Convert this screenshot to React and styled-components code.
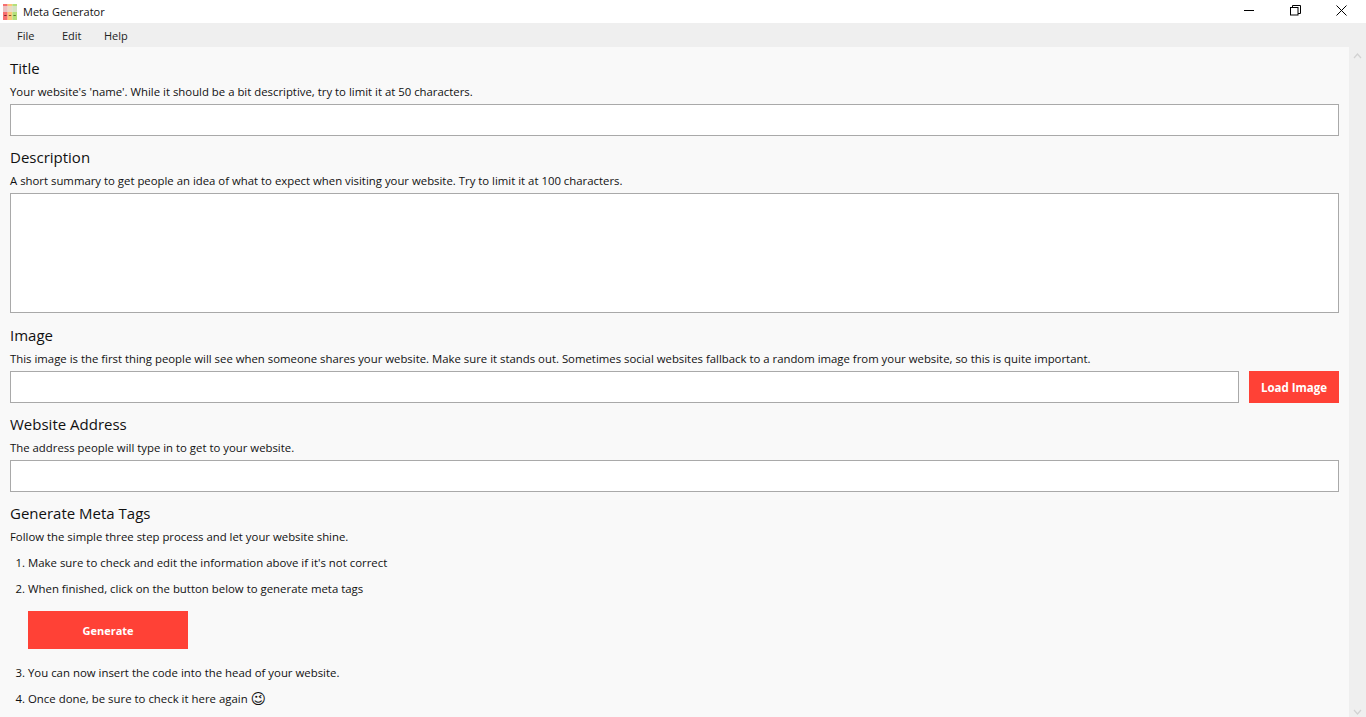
import React from 'react';
import styled, { createGlobalStyle } from 'styled-components';

const GlobalStyle = createGlobalStyle`
  html, body { margin: 0; padding: 0; height: 100%; overflow: hidden; }
  #root { height: 100%; }
  body { font-family: "Open Sans", "Noto Sans", sans-serif; color: #111; }
`;

const Window = styled.div`
  height: 717px;
  display: flex;
  flex-direction: column;
  background: #fff;
`;

const TitleBar = styled.div`
  height: 23px;
  display: flex;
  align-items: center;
  background: #fff;
  flex: none;
`;

const AppName = styled.span`
  font-size: 11px;
  margin-left: 6px;
  color: #111;
`;

const WindowButtons = styled.div`
  margin-left: auto;
  margin-right: 2px;
  padding-bottom: 3px;
  display: flex;
`;

const WindowButton = styled.div`
  width: 46px;
  height: 20px;
  display: flex;
  align-items: center;
  justify-content: center;
`;

const MenuBar = styled.div`
  height: 24px;
  display: grid;
  grid-template-columns: 45px 42px auto;
  align-items: center;
  background: #efefef;
  padding: 1px 0 0 17px;
  box-sizing: border-box;
  flex: none;
`;

const MenuItem = styled.span`
  font-size: 11px;
  color: #222;
`;

const Body = styled.div`
  flex: 1;
  display: flex;
  min-height: 0;
`;

const Content = styled.div`
  flex: 1;
  background: #f9f9f9;
  padding: 10px 10px 0;
  overflow: hidden;
`;

const ScrollTrack = styled.div`
  width: 17px;
  background: #efefef;
  display: flex;
  flex-direction: column;
  justify-content: space-between;
  align-items: center;
  padding: 6px 0 2px;
  box-sizing: border-box;
`;

const Section = styled.section`
  margin-bottom: ${p => p.$gap || 10}px;
`;

const Heading = styled.h2`
  margin: 0;
  font-size: 15px;
  font-weight: 400;
  line-height: 22px;
`;

const Hint = styled.p`
  margin: 4px 0 3px;
  font-size: 11.37px;
  line-height: 18px;
`;

const Row = styled.div`
  display: flex;
  gap: 10px;
`;

const Input = styled.input`
  display: block;
  flex: 1;
  width: 100%;
  box-sizing: border-box;
  height: 32px;
  border: 1px solid #a9a9a9;
  background: #fff;
  outline: none;
`;

const TextArea = styled.textarea`
  display: block;
  width: 100%;
  box-sizing: border-box;
  height: 120px;
  border: 1px solid #a9a9a9;
  background: #fff;
  outline: none;
  resize: none;
`;

const RedButton = styled.button`
  flex: none;
  width: ${p => p.$wide ? '160px' : '90px'};
  height: ${p => p.$wide ? '38px' : '32px'};
  border: none;
  background: #ff4136;
  color: #fff;
  font-family: inherit;
  font-size: ${p => p.$wide ? '11px' : '11.5px'};
  font-weight: 700;
  padding: 0;
`;

const Steps = styled.ol`
  margin: 8px 0 0;
  padding: 0 0 0 18px;
  font-size: 11.4px;
`;

const Step = styled.li`
  line-height: 18px;
  height: auto;
  margin-bottom: 8px;
`;

const GenerateWrap = styled.div`
  margin: 13px 0 15px;
`;

const Wink = styled.span`
  font-family: "DejaVu Sans", sans-serif;
  font-size: 15px;
  line-height: 14px;
  vertical-align: -1px;
`;

function AppIcon() {
  return (
    <svg width="14" height="16" viewBox="0 0 14 16" style={{ marginLeft: 3, marginTop: 1, flex: 'none' }}>
      <rect x="0" y="0" width="4.67" height="16" fill="#f76f6f" />
      <rect x="4.67" y="0" width="4.67" height="16" fill="#fbc77a" />
      <rect x="9.33" y="0" width="4.67" height="16" fill="#b5e07a" />
      <rect x="0" y="2" width="14" height="6" fill="#e4e4e4" opacity="0.7" />
      <rect x="1.2" y="11" width="2.4" height="1" fill="#7a2b2b" />
      <rect x="5.8" y="11" width="2.4" height="1" fill="#7a5a2b" />
      <rect x="10.4" y="11" width="2.4" height="1" fill="#5a7a2b" />
    </svg>
  );
}

function Arrow({ down }) {
  return (
    <svg width="9" height="6" viewBox="0 0 9 6">
      <path d={down ? 'M1 1l3.5 4L8 1' : 'M1 5l3.5-4L8 5'} fill="none" stroke="#d2d2d2" strokeWidth="1.2" />
    </svg>
  );
}

export default function App() {
  return (
    <>
      <GlobalStyle />
      <Window>
        <TitleBar>
          <AppIcon />
          <AppName>Meta Generator</AppName>
          <WindowButtons>
            <WindowButton>
              <svg width="11" height="11" viewBox="0 0 11 11"><path d="M0 5.5h10" stroke="#000" /></svg>
            </WindowButton>
            <WindowButton>
              <svg width="11" height="11" viewBox="0 0 11 11" fill="none" stroke="#000"><rect x=".5" y="2.5" width="7.5" height="7.5" /><path d="M2.5 2.5V.5h8v8H8" /></svg>
            </WindowButton>
            <WindowButton>
              <svg width="11" height="11" viewBox="0 0 11 11"><path d="M.5.5l10 10M10.5.5l-10 10" stroke="#000" /></svg>
            </WindowButton>
          </WindowButtons>
        </TitleBar>
        <MenuBar>
          <MenuItem>File</MenuItem>
          <MenuItem>Edit</MenuItem>
          <MenuItem>Help</MenuItem>
        </MenuBar>
        <Body>
          <Content>
            <Section>
              <Heading>Title</Heading>
              <Hint>Your website's 'name'. While it should be a bit descriptive, try to limit it at 50 characters.</Hint>
              <Input />
            </Section>
            <Section $gap={11}>
              <Heading>Description</Heading>
              <Hint>A short summary to get people an idea of what to expect when visiting your website. Try to limit it at 100 characters.</Hint>
              <TextArea />
            </Section>
            <Section>
              <Heading>Image</Heading>
              <Hint>This image is the first thing people will see when someone shares your website. Make sure it stands out. Sometimes social websites fallback to a random image from your website, so this is quite important.</Hint>
              <Row>
                <Input />
                <RedButton>Load Image</RedButton>
              </Row>
            </Section>
            <Section>
              <Heading>Website Address</Heading>
              <Hint>The address people will type in to get to your website.</Hint>
              <Input />
            </Section>
            <Section>
              <Heading>Generate Meta Tags</Heading>
              <Hint>Follow the simple three step process and let your website shine.</Hint>
              <Steps>
                <Step>Make sure to check and edit the information above if it's not correct</Step>
                <Step>
                  When finished, click on the button below to generate meta tags
                  <GenerateWrap><RedButton $wide>Generate</RedButton></GenerateWrap>
                </Step>
                <Step>You can now insert the code into the head of your website.</Step>
                <Step>Once done, be sure to check it here again <Wink>{'\u{1F609}\uFE0E'}</Wink></Step>
              </Steps>
            </Section>
          </Content>
          <ScrollTrack>
            <Arrow />
            <Arrow down />
          </ScrollTrack>
        </Body>
      </Window>
    </>
  );
}
